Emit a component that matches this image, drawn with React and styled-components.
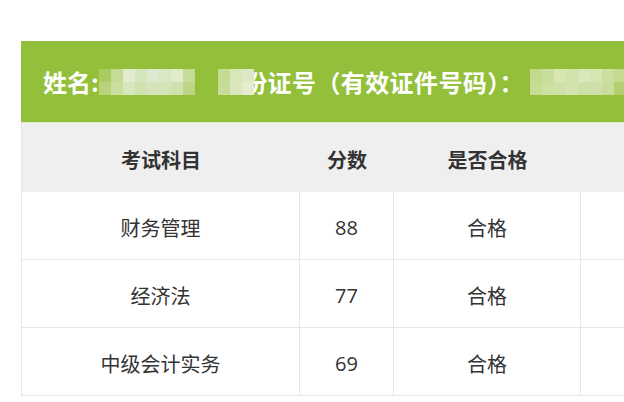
import React from "react";
import styled, { createGlobalStyle } from "styled-components";

const Global = createGlobalStyle`
  html, body { margin: 0; padding: 0; background: #fff; overflow: hidden; }
  body { font-family: "Open Sans", "Noto Sans CJK SC", sans-serif; }
`;

const Page = styled.div`
  padding: 41px 0 0 21px;
  width: 624px;
  height: 402px;
  box-sizing: border-box;
  overflow: hidden;
`;

const Card = styled.div`
  width: 760px;
  background: #fff;
`;

const Banner = styled.div`
  height: 81px;
  background: #93bf3a;
  border-bottom: 1px solid #dfeccb;
  display: flex;
  align-items: center;
  padding-left: 22px;
  color: #fff;
  font-family: "Noto Sans CJK SC", sans-serif;
  font-weight: 700;
  font-size: 24px;
  white-space: nowrap;
  overflow: hidden;
`;

const Label = styled.span`
  position: relative;
  display: inline-block;
  margin-left: ${(p) => p.$ml || 0}px;
  letter-spacing: ${(p) => p.$ls || 0}px;
`;

const MosaicGrid = styled.span`
  display: inline-grid;
  grid-template-columns: repeat(${(p) => p.$cols}, ${(p) => p.$cell}px);
  grid-auto-rows: 13px;
  margin-left: ${(p) => p.$ml || 0}px;
  ${(p) => (p.$overlay ? `position: absolute; top: 50%; transform: translateY(-50%); left: ${p.$left}px;` : "")}
`;

const Tile = styled.span`
  display: block;
`;

function Mosaic({ rows, cell = 12, ml, overlay, left }) {
  const cols = rows[0].length;
  return (
    <MosaicGrid $cols={cols} $cell={cell} $ml={ml} $overlay={overlay} $left={left}>
      {rows.flat().map((c, i) => (
        <Tile key={i} style={{ background: c }} />
      ))}
    </MosaicGrid>
  );
}

const nameTiles = [
  ["#a9cc62", "#c4dc96", "#e3ecd0", "#d5e6bb", "#dfe9d2", "#d9e8c2", "#e1ebcb", "#c6dc94"],
  ["#b7d47d", "#c9df9f", "#d8e6bd", "#d0e2b1", "#d6e4bd", "#d4e4b9", "#d0e1ae", "#bdd586"],
];
const idTiles = [
  ["#c3db92", "#d8e7b9", "#dde9c5"],
  ["#c6dd98", "#d9e7bb", "#e4edd0"],
];
const numTiles = [
  ["#c2da8f", "#c8de9b", "#d8e7b0", "#d0e3a9", "#d8e8ba", "#d5e6b3", "#cddf9f", "#c4db8e", "#c8dd98", "#d2e4ac"],
  ["#c5dc95", "#cbe0a1", "#cee1a6", "#d4e4b1", "#cde1a6", "#cfe1a8", "#c8dd9c", "#b1d06e", "#c6dc95", "#cde0a2"],
];

const Grid = styled.div`
  display: grid;
  grid-template-columns: 278px 94px 187px 187px;
  border-left: 1px solid #e6e6e6;
`;

const HeadCell = styled.div`
  height: 69px;
  background: #efefef;
  display: flex;
  align-items: center;
  justify-content: center;
  padding-top: 3px;
  box-sizing: border-box;
  font-family: "Noto Sans CJK SC", sans-serif;
  font-weight: 700;
  font-size: 20px;
  color: #333;
`;

const Cell = styled.div`
  height: 68px;
  box-sizing: border-box;
  border-right: 1px solid #e6e6e6;
  border-bottom: 1px solid #e6e6e6;
  display: flex;
  align-items: center;
  justify-content: center;
  padding-top: 3px;
  font-size: 20px;
  color: #333;
`;

const rows = [
  ["财务管理", "88", "合格", ""],
  ["经济法", "77", "合格", ""],
  ["中级会计实务", "69", "合格", ""],
];

export default function App() {
  return (
    <>
      <Global />
      <Page>
        <Card>
          <Banner>
            <Label>姓名:</Label>
            <Mosaic rows={nameTiles} cell={12} ml={0} />
            <Label $ml={24} $ls={0.4}>
              身份证号（有效证件号码）：
              <Mosaic rows={idTiles} cell={12} overlay left={-1} />
            </Label>
            <Mosaic rows={numTiles} cell={12} ml={6} />
          </Banner>
          <Grid>
            <HeadCell>考试科目</HeadCell>
            <HeadCell>分数</HeadCell>
            <HeadCell>是否合格</HeadCell>
            <HeadCell />
            {rows.map((r, i) =>
              r.map((v, j) => <Cell key={`${i}-${j}`}>{v}</Cell>)
            )}
          </Grid>
        </Card>
      </Page>
    </>
  );
}
